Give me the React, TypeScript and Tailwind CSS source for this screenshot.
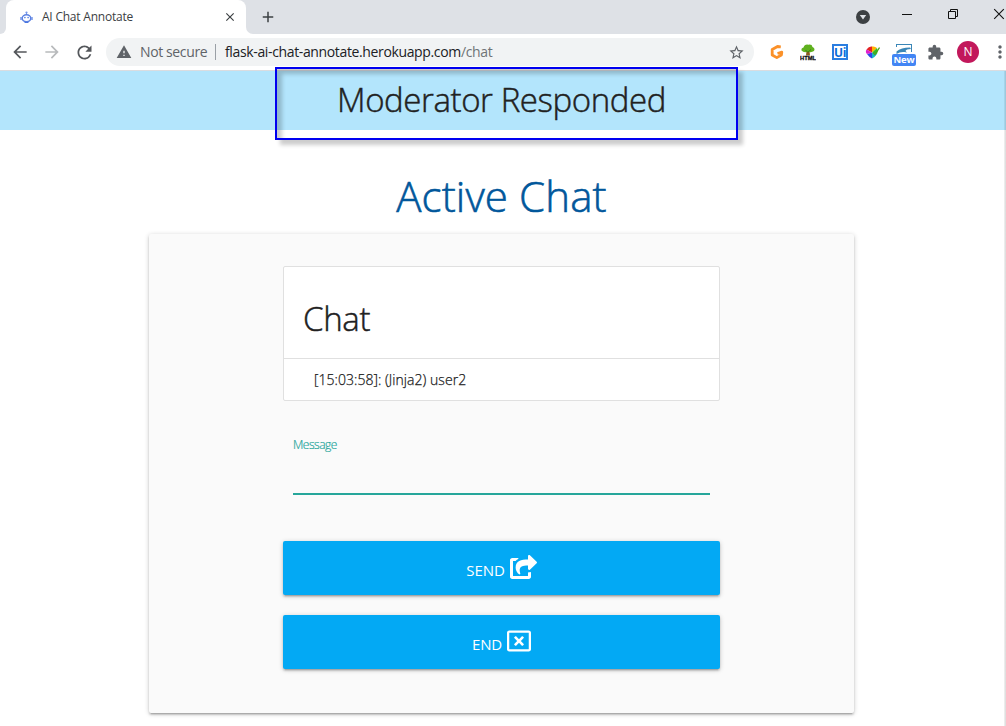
import React from "react";
import { FaShareSquare, FaRegWindowClose } from "react-icons/fa";
import { MdArrowBack, MdArrowForward, MdRefresh, MdWarning, MdStarBorder, MdExtension, MdMoreVert, MdAdd, MdClose } from "react-icons/md";

function RobotIcon() {
  return (
    <svg width="13" height="13" viewBox="0 0 13 13" fill="none" className="shrink-0">
      <circle cx="6.5" cy="1.5" r="1.1" fill="#7596e8" />
      <path d="M6.5 2v2" stroke="#7596e8" />
      <ellipse cx="6.500" cy="7.300" rx="4.300" ry="3.500" stroke="#5a80e2" strokeWidth="1.500" />
      <path d="M1 6v3M12 6v3" stroke="#6d90e6" strokeWidth="1.400" />
      <circle cx="4.9" cy="6.6" r=".8" fill="#4a76e0" />
      <circle cx="8.1" cy="6.6" r=".8" fill="#4a76e0" />
      <path d="M4.600 11.500h3.800" stroke="#4a76e0" />
    </svg>
  );
}

function TabStrip() {
  return (
    <div className="flex h-[34px] bg-[#dee1e6]">
      <div className="w-[6px] bg-white">
        <div className="h-full rounded-br-[7px] bg-[#dee1e6]" />
      </div>
      <div className="flex w-[240px] items-center rounded-t-[8px] bg-white pl-[14px] pr-[9px]">
        <RobotIcon />
        <span className="ml-[9px] flex-1 whitespace-nowrap text-[12px] tracking-[-0.22px] text-[#3c4043]">AI Chat Annotate</span>
        <MdClose size={14} className="text-[#3c4043]" />
      </div>
      <div className="w-[7px] bg-white">
        <div className="h-full rounded-bl-[7px] bg-[#dee1e6]" />
      </div>
      <div className="flex w-[31px] items-center pl-[6px]">
        <MdAdd size={18} className="text-[#3c4043]" />
      </div>
      <div className="flex-1" />
      <svg width="156" height="34" viewBox="850 0 156 34" fill="none" className="shrink-0">
        <circle cx="863" cy="17" r="7" fill="#3c4043" />
        <path d="M859.8 15h6.4l-3.2 4.4z" fill="#dee1e6" />
        <path d="M902 14.5h10" stroke="#111" />
        <path d="M948.5 11.5h7v7h-7zM950.5 11.5v-2h7v7h-2" stroke="#111" />
        <path d="M994.2 9.2l9.6 9.6M1003.8 9.2l-9.6 9.6" stroke="#111" strokeWidth="1.1" />
      </svg>
    </div>
  );
}

function ExtensionIcons() {
  return (
    <>
      <svg width="14" height="16" viewBox="0 0 14 16" fill="none" className="shrink-0">
        <path d="M10.800 2.800L7.500 2.500 2.200 5.500v5.500l4.600 2.600 4.600-2.600.4-2.800L7.500 9.500" stroke="#fb9129" strokeWidth="2.800" strokeLinejoin="round" />
      </svg>
      <svg width="16" height="17" viewBox="0 0 16 17" className="ml-[16px] shrink-0">
        <path d="M6.5 7h3l.5 4.500h-4z" fill="#8b5a1e" />
        <path d="M1.500 6.500Q1 4 3.500 3.500 4.500 0 8.300 .7 12 0 12.500 3 15.500 4.500 14 7 11 9 8 7.500 4 9.200 1.500 6.500" fill="#5fb11f" />
        <path d="M8 8.500L5.500 6M8 8l3-2.500" stroke="#3b7e10" />
        <text x="0" y="16" fontSize="6" fontWeight="800" textLength="16" lengthAdjust="spacingAndGlyphs" fill="#111" stroke="#111" strokeWidth=".3" className="font-['Liberation_Sans',sans-serif]">HTML</text>
      </svg>
      <div className="ml-[16px] flex h-[16px] w-[16px] shrink-0 items-center justify-center border-2 border-[#2a7de0] pt-px text-[12px] font-bold leading-none tracking-[-0.3px] text-[#0b6bd8]">Ui</div>
      <svg width="15" height="13" viewBox="0 0 15 13" className="ml-[17px] shrink-0">
        <path d="M7 6.500L1.500 3.500Q4 0 7 .5z" fill="#e32222" />
        <path d="M7 6.500L7 .5Q10 0 12 2z" fill="#ffb400" />
        <path d="M7 6.500L12 2Q13.500 5 12 8z" fill="#34bd24" />
        <path d="M7 6.500L12 8Q10 11 7 12.500z" fill="#18b5c3" />
        <path d="M7 6.500V12.500Q4 11 2 8z" fill="#3145e6" />
        <path d="M7 6.500L2 8Q0 6 1.500 3.500z" fill="#e01dce" />
        <path d="M8 6.500l2 2 4.500-7" stroke="#48a51c" strokeWidth="1.300" fill="none" />
      </svg>
      <div className="ml-[12px] flex w-[24px] shrink-0 flex-col items-center pt-[6px]">
        <svg width="16" height="10" viewBox="0 0 16 10" fill="none">
          <path d="M0 .5h16M15.500 0v8M.5 0v3" stroke="#3a86b7" />
          <path d="M.5 10V7.500Q5 3.500 14 3.500L15 5Q10 5 9.500 7l1.500 1.500L8.500 8Q4 7.500 .5 10" fill="#3a86b7" />
        </svg>
        <div className="flex h-[12px] w-[24px] items-center justify-center rounded-[2px] bg-[#4285f4] text-[9.500px] font-bold leading-none tracking-[-0.2px] text-white">New</div>
      </div>
    </>
  );
}

function Toolbar() {
  return (
    <div className="flex h-[37px] items-center border-b border-[#dadce0] bg-white pl-[10px]">
      <MdArrowBack size={20} className="shrink-0 text-[#54575b]" />
      <MdArrowForward size={20} className="ml-[12px] shrink-0 text-[#b8babc]" />
      <MdRefresh size={21} className="ml-[12px] shrink-0 text-[#54575b]" />
      <div className="ml-[11px] flex h-[28px] w-[648px] shrink-0 items-center rounded-full bg-[#f1f3f4] pl-[10px] pr-[9px]">
        <MdWarning size={16} className="shrink-0 text-[#5f6368]" />
        <span className="ml-[8px] w-[75px] whitespace-nowrap pb-px text-[14px] tracking-[-0.38px] text-[#5f6368]">Not secure</span>
        <div className="h-[16px] w-px bg-[#9aa0a6]" />
        <span className="ml-[9px] flex-1 whitespace-nowrap pb-px text-[14px] tracking-[-0.36px] text-[#202124]">
          flask-ai-chat-annotate.herokuapp.com<span className="text-[#6f7377]">/chat</span>
        </span>
        <MdStarBorder size={17} className="shrink-0 text-[#5f6368]" />
      </div>
      <div className="ml-[16px] flex shrink-0 items-center">
        <ExtensionIcons />
      </div>
      <MdExtension size={17} className="ml-[11px] shrink-0 text-[#5f6368]" />
      <div className="ml-[13px] flex size-[22px] shrink-0 items-center justify-center rounded-full bg-[#c2185b] text-[12px] text-white">N</div>
      <MdMoreVert size={20} className="ml-[11px] shrink-0 text-[#5f6368]" />
    </div>
  );
}

function ActionButton({ label, icon }: { label: string; icon: React.ReactNode }) {
  return (
    <button className="flex h-[54px] w-full items-center justify-center gap-[5px] rounded-[2px] bg-[#03a9f4] text-[15px] text-white shadow-[0_2px_2px_0_rgba(0,0,0,0.14),0_3px_1px_-2px_rgba(0,0,0,0.12),0_1px_5px_0_rgba(0,0,0,0.2)]">
      <span className="pt-[5px] tracking-[-0.1px]">{label}</span>
      {icon}
    </button>
  );
}

export default function App() {
  return (
    <div className="relative flex h-[726px] w-[1006px] flex-col overflow-hidden bg-white font-['Open_Sans','Noto_Sans',sans-serif]">
      <TabStrip />
      <Toolbar />
      <div className="relative flex flex-1 flex-col items-center pr-[3px]">
        <header className="-mr-[3px] flex h-[59px] w-[1006px] shrink-0 justify-center bg-[#b3e5fc] pr-[3px]">
          <h2 className="whitespace-nowrap text-[33px] font-light leading-[57px] tracking-[-0.42px] text-[#212121] [-webkit-text-stroke:0.45px_#212121]">Moderator Responded</h2>
        </header>
        <h1 className="mt-[37px] h-[67px] whitespace-nowrap text-[42px] font-light leading-[57px] tracking-[0.12px] text-[#01579b] [-webkit-text-stroke:0.6px_#01579b]">Active Chat</h1>
        <main className="h-[479px] w-[705px] shrink-0 rounded-[2px] bg-[#fafafa] px-[134px] pt-[32px] shadow-[0_2px_2px_0_rgba(0,0,0,0.14),0_3px_1px_-2px_rgba(0,0,0,0.12),0_1px_5px_0_rgba(0,0,0,0.2)]">
          <section className="h-[135px] rounded-[2px] border border-[#e0e0e0] bg-white">
            <h3 className="h-[92px] border-b border-[#e0e0e0] pl-[19px] pt-[24px] text-[33px] font-light leading-[56px] tracking-[-0.3px] text-[#212121] [-webkit-text-stroke:0.45px_#212121]">Chat</h3>
            <p className="pl-[30px] text-[14px] font-light leading-[41px] tracking-[0.04px] text-[#212121] [-webkit-text-stroke:0.25px_#212121]">[15:03:58]: (Jinja2) user2</p>
          </section>
          <div className="mx-[10px] mt-[34px] h-[60px] border-b-2 border-[#26a69a] text-[12px] font-light leading-[20px] tracking-[-0.5px] text-[#26a69a] [-webkit-text-stroke:0.2px_#26a69a]">Message</div>
          <div className="mt-[46px] flex flex-col gap-[20px]">
            <ActionButton label="SEND" icon={<FaShareSquare size={24} className="mb-[2px] w-[27px]" />} />
            <ActionButton label="END" icon={<FaRegWindowClose size={24} className="mb-[2px]" />} />
          </div>
        </main>
        <div className="absolute inset-y-0 right-0 w-[2px] bg-gradient-to-r from-black/5 to-black/15" />
      </div>
      <div className="absolute left-[275px] top-[67px] h-[73px] w-[463px] border-2 border-[#0000f0] shadow-[5px_5px_4px_rgba(0,0,0,0.2),inset_5px_5px_4px_rgba(0,0,0,0.2)]" />
    </div>
  );
}
